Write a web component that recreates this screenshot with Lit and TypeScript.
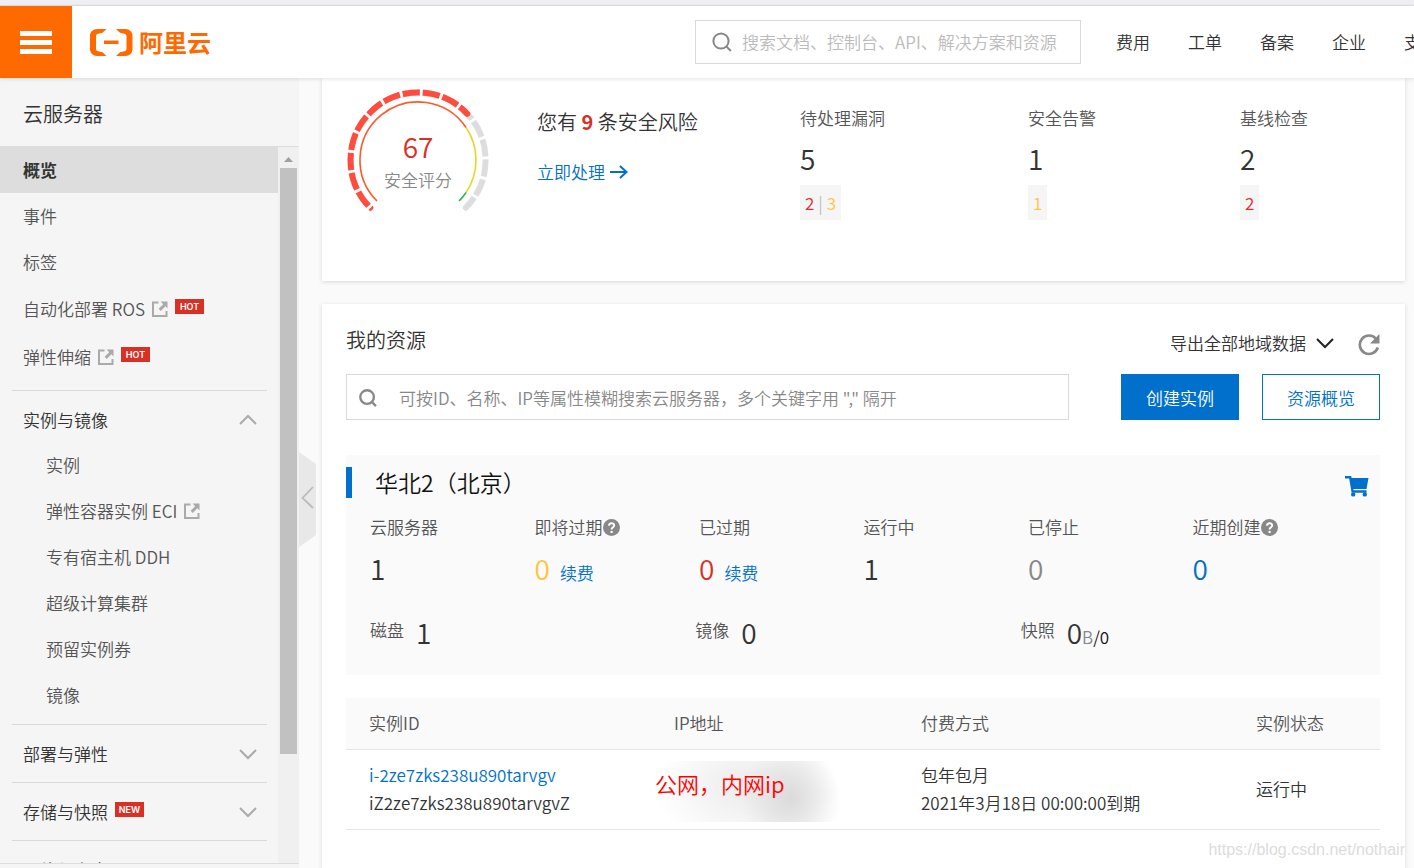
import { LitElement, html, css, svg } from "lit";
import { customElement, property } from "lit/decorators.js";
import { classMap } from "lit/directives/class-map.js";

const reset = css`
  :host,
  * {
    box-sizing: border-box;
  }
  a {
    color: inherit;
    text-decoration: none;
  }
  button {
    font: inherit;
    color: inherit;
    background: none;
    border: 0;
    padding: 0;
    cursor: pointer;
  }
  input {
    font: inherit;
    color: #333;
    border: 0;
    padding: 0;
    outline: 0;
    background: none;
    flex: 1;
    min-width: 0;
  }
  svg {
    display: block;
    flex: none;
  }
  h1,
  h2,
  h3,
  p,
  ul,
  dl,
  dd {
    margin: 0;
    padding: 0;
    font-weight: inherit;
    list-style: none;
  }
`;

const searchIcon = (size: number, width: number) => html`<svg
  width=${size}
  height=${size}
  viewBox="0 0 20 20"
  fill="none"
  stroke="#888"
  stroke-width=${width}
  aria-hidden="true"
>
  <circle cx="9" cy="9" r="7.6" />
  <path d="M14.4 14.4 18.8 19" />
</svg>`;

const chevron = (direction: "up" | "down", color: string) => html`<svg
  width="18"
  height="12"
  viewBox="0 0 18 12"
  fill="none"
  stroke=${color}
  stroke-width="2"
  aria-hidden="true"
>
  <path d=${direction === "up" ? "M1 10 9 2 17 10" : "M1 2 9 10 17 2"} />
</svg>`;

const externalIcon = html`<svg width="16" height="16" viewBox="0 0 16 16" aria-hidden="true">
  <path d="M6.500 1.500H1V15H14.500V10" fill="none" stroke="#aaa" stroke-width="2" />
  <path d="M8.600.6H15.500V7.400L13.400 5.300 8.800 10 6.600 7.800 11.200 3.200Z" fill="#aaa" />
</svg>`;

const helpIcon = html`<svg width="17" height="17" viewBox="0 0 17 17" aria-hidden="true">
  <circle cx="8.500" cy="8.500" r="8.500" fill="#888" />
  <path d="M6 6.800C6 3.400 11.200 3.500 11.200 6.600 11.200 8.400 8.600 8.300 8.600 10.400" fill="none" stroke="#fff" stroke-width="1.900" />
  <circle cx="8.600" cy="12.900" r="1.200" fill="#fff" />
</svg>`;

@customElement("top-bar")
class TopBar extends LitElement {
  static styles = [
    reset,
    css`
      :host {
        display: flex;
        align-items: center;
        flex: none;
        height: 72px;
        background: #fff;
        box-shadow: 0 1px 4px rgba(0, 0, 0, 0.12);
        position: relative;
        z-index: 2;
      }
      .menu {
        flex: none;
        width: 72px;
        height: 72px;
        background: #ff6a00;
        display: flex;
        align-items: center;
        justify-content: center;
      }
      .logo {
        display: flex;
        align-items: center;
        gap: 6px;
        margin-left: 18px;
        color: #ff6a00;
        font-size: 24px;
        font-weight: 700;
        line-height: 32px;
        white-space: nowrap;
      }
      .search {
        display: flex;
        align-items: center;
        gap: 10px;
        flex: 0 1 386px;
        height: 44px;
        margin-left: auto;
        padding: 0 16px;
        border: 1px solid #d9d9d9;
      }
      .search input::placeholder {
        color: #bbb;
      }
      .links {
        display: flex;
        gap: 38px;
        flex: 0 0 298px;
        margin-left: 35px;
        overflow: hidden;
        white-space: nowrap;
      }
      .links li {
        flex: none;
      }
    `,
  ];

  render() {
    return html`
      <button class="menu" aria-label="菜单">
        <svg width="32" height="23" viewBox="0 0 32 23" fill="#fff">
          <path d="M0 0h32v5H0zM0 9h32v5H0zM0 18h32v5H0z" />
        </svg>
      </button>
      <a class="logo" href="#">
        <svg width="43" height="27" viewBox="0 0 43 27" fill="currentColor" aria-hidden="true">
          <path d="M16.500 0H7C3 0 0 3 0 7V20C0 24 3 27 7 27H16.500L12.500 23.200 8 22.300Q6 21.800 6 20V7Q6 5.200 8 4.700L12.500 3.800Z" />
          <path d="M26 0h9.500c4 0 7 3 7 7v13c0 4-3 7-7 7H26l4-3.800 4.500-.9q2-.5 2-2.300V7q0-1.800-2-2.300L30 3.800Z" />
          <path d="M14 11.500h14.500v3.500H14z" />
        </svg>
        阿里云
      </a>
      <label class="search">
        ${searchIcon(20, 2)}
        <input type="text" aria-label="搜索" placeholder="搜索文档、控制台、API、解决方案和资源" />
      </label>
      <ul class="links">
        ${["费用", "工单", "备案", "企业", "支持"].map((t) => html`<li><a href="#">${t}</a></li>`)}
      </ul>
    `;
  }
}

interface NavItem {
  label: string;
  external?: boolean;
  badge?: string;
  active?: boolean;
}

interface NavGroup {
  label: string;
  badge?: string;
  items?: NavItem[];
}

const topItems: NavItem[] = [
  { label: "概览", active: true },
  { label: "事件" },
  { label: "标签" },
  { label: "自动化部署 ROS", external: true, badge: "HOT" },
  { label: "弹性伸缩", external: true, badge: "HOT" },
];

const groups: NavGroup[] = [
  {
    label: "实例与镜像",
    items: [
      { label: "实例" },
      { label: "弹性容器实例 ECI", external: true },
      { label: "专有宿主机 DDH" },
      { label: "超级计算集群" },
      { label: "预留实例券" },
      { label: "镜像" },
    ],
  },
  { label: "部署与弹性" },
  { label: "存储与快照", badge: "NEW" },
  { label: "网络与安全" },
];

@customElement("side-nav")
class SideNav extends LitElement {
  static styles = [
    reset,
    css`
      :host {
        display: flex;
        flex-direction: column;
        background: #f5f5f5;
        min-height: 0;
        color: #555;
      }
      .title {
        flex: none;
        height: 69px;
        padding: 20px 23px 0;
        border-bottom: 1px solid #ddd;
        font-size: 20px;
        line-height: 32px;
        color: #333;
      }
      .body {
        flex: 1;
        min-height: 0;
        display: flex;
        overflow: hidden;
        border-bottom: 1px solid #ddd;
        margin-bottom: 4px;
      }
      nav {
        flex: 1;
        min-width: 0;
      }
      .item {
        display: flex;
        align-items: center;
        height: 46px;
        padding-left: 23px;
      }
      .item.active {
        background: #ddd;
        color: #333;
        font-weight: 700;
      }
      .item.tagged {
        height: 48px;
      }
      .item svg {
        margin-left: 7px;
      }
      .badge {
        align-self: flex-start;
        width: 29px;
        margin: 14px 0 0 7px;
        background: #d93026;
        color: #fff;
        font: 600 9px/15px Inter, sans-serif;
        text-align: center;
      }
      .group {
        margin: 0 11px 0 12px;
        padding: 7px 0 6px;
        border-top: 1px solid #d9d9d9;
      }
      .group:first-of-type {
        margin-top: 9px;
      }
      .head {
        display: flex;
        align-items: center;
        width: 100%;
        height: 44px;
        padding: 0 10px 0 11px;
        color: #333;
      }
      .head svg {
        margin-left: auto;
      }
      .head .badge {
        margin: 12px 0 0 7px;
      }
      .group .item {
        padding-left: 34px;
      }
      .scroll {
        flex: none;
        width: 21px;
        padding: 10px 2px 0;
        background: #f0f0f0;
      }
      .scroll svg {
        margin: 0 auto 6px;
      }
      .thumb {
        height: 83%;
        background: #c1c1c1;
      }
    `,
  ];

  private item(i: NavItem) {
    return html`<li>
      <a class=${classMap({ item: true, active: !!i.active, tagged: !!i.badge })} href="#">
        ${i.label}${i.external ? externalIcon : ""}${i.badge ? html`<span class="badge">${i.badge}</span>` : ""}
      </a>
    </li>`;
  }

  render() {
    return html`
      <h1 class="title">云服务器</h1>
      <div class="body">
        <nav>
          <ul>
            ${topItems.map((i) => this.item(i))}
          </ul>
          ${groups.map(
            (g) => html`<section class="group">
              <button class="head">
                ${g.label}${g.badge ? html`<span class="badge">${g.badge}</span>` : ""}
                ${chevron(g.items ? "up" : "down", "#aaa")}
              </button>
              ${g.items ? html`<ul>${g.items.map((i) => this.item(i))}</ul>` : ""}
            </section>`,
          )}
        </nav>
        <div class="scroll">
          <svg width="9" height="5" viewBox="0 0 9 5" fill="#a0a0a0"><path d="M0 5 4.500 0 9 5Z" /></svg>
          <div class="thumb"></div>
        </div>
      </div>
    `;
  }
}

const arcPoint = (cx: number, cy: number, r: number, deg: number) => {
  const a = (deg * Math.PI) / 180;
  return `${(cx + r * Math.cos(a)).toFixed(2)} ${(cy + r * Math.sin(a)).toFixed(2)}`;
};

/** Arc path on a 270 degree dial; from and to are degrees along the dial. */
const arc = (r: number, from: number, to: number) =>
  `M${arcPoint(72, 72, r, 135 + from)}A${r} ${r} 0 ${to - from > 180 ? 1 : 0} 1 ${arcPoint(72, 72, r, 135 + to)}`;

@customElement("score-dial")
class ScoreDial extends LitElement {
  @property({ type: Number }) score = 0;

  static styles = css`
    :host {
      display: grid;
      width: 144px;
      height: 144px;
    }
    svg,
    .text {
      grid-area: 1 / 1;
    }
    .text {
      text-align: center;
      padding-top: 40px;
    }
    .value {
      font-size: 28px;
      line-height: 36px;
      color: #d93026;
    }
    .caption {
      line-height: 32px;
      color: #888;
    }
  `;

  render() {
    const end = (this.score / 100) * 270;
    const ticks = Array.from({ length: 16 }, (_, k) => 1 + k * 17.1);
    return html`
      <svg width="144" height="144" viewBox="0 0 144 144" fill="none" aria-hidden="true">
        <path d=${arc(67.5, 0, 270)} stroke="#ddd" stroke-width="6" stroke-linecap="round" />
        <path d=${arc(67.5, 0, end + 1)} stroke="#ff4c3f" stroke-width="6" stroke-linecap="round" />
        ${ticks.map((t) => svg`<path d=${arc(67.5, t - 1.2, t + 1.2)} stroke="#fff" stroke-width="8" />`)}
        <path d=${arc(58, 0, 191)} stroke="#fb5a2c" stroke-width="1.600" />
        <path d=${arc(58, 191, 259)} stroke="#e6d821" stroke-width="1.600" />
        <path d=${arc(58, 259, 270)} stroke="#35b558" stroke-width="1.600" />
      </svg>
      <div class="text">
        <div class="value">${this.score}</div>
        <div class="caption">安全评分</div>
      </div>
    `;
  }
}

@customElement("security-card")
class SecurityCard extends LitElement {
  static styles = [
    reset,
    css`
      :host {
        display: grid;
        grid-template-columns: 191px 263fr 228fr 212fr 141fr;
        padding: 10px 24px 49px;
        background: #fff;
        box-shadow: 0 1px 4px rgba(0, 0, 0, 0.14);
      }
      .risk {
        padding-top: 18px;
        font-size: 20px;
        line-height: 32px;
      }
      .risk strong {
        color: #d93026;
      }
      .handle {
        display: inline-flex;
        align-items: center;
        gap: 5px;
        margin-top: 18px;
        font-size: 17px;
        color: #0070cc;
      }
      .stat {
        padding-top: 18px;
        color: #555;
      }
      .num {
        margin-top: 8px;
        font-size: 28px;
        line-height: 40px;
        color: #333;
      }
      .levels {
        display: inline-flex;
        gap: 4px;
        height: 35px;
        margin-top: 7px;
        padding: 0 5px;
        background: #f5f5f5;
        line-height: 36px;
        color: #bbb;
      }
      .high {
        color: #d93026;
      }
      .mid {
        color: #ffc440;
      }
    `,
  ];

  render() {
    return html`
      <score-dial .score=${67}></score-dial>
      <div class="risk">
        <p>您有 <strong>9</strong> 条安全风险</p>
        <a class="handle" href="#"
          >立即处理
          <svg width="18" height="14" viewBox="0 0 18 14" fill="none" stroke="currentColor" stroke-width="2">
            <path d="M0 7H16M10 1 16.500 7 10 13" />
          </svg>
        </a>
      </div>
      <dl class="stat">
        <dt>待处理漏洞</dt>
        <dd class="num">5</dd>
        <dd class="levels"><span class="high">2</span><span>|</span><span class="mid">3</span></dd>
      </dl>
      <dl class="stat">
        <dt>安全告警</dt>
        <dd class="num">1</dd>
        <dd class="levels"><span class="mid">1</span></dd>
      </dl>
      <dl class="stat">
        <dt>基线检查</dt>
        <dd class="num">2</dd>
        <dd class="levels"><span class="high">2</span></dd>
      </dl>
    `;
  }
}

interface Stat {
  label: string;
  value: number;
  tone?: string;
  help?: boolean;
  renew?: boolean;
}

const stats: Stat[] = [
  { label: "云服务器", value: 1 },
  { label: "即将过期", value: 0, tone: "warn", help: true, renew: true },
  { label: "已过期", value: 0, tone: "danger", renew: true },
  { label: "运行中", value: 1 },
  { label: "已停止", value: 0, tone: "muted" },
  { label: "近期创建", value: 0, tone: "link", help: true },
];

@customElement("resource-card")
class ResourceCard extends LitElement {
  static styles = [
    reset,
    css`
      :host {
        display: block;
        flex: 1;
        padding: 20px 25px 0 24px;
        background: #fff;
        box-shadow: 0 1px 4px rgba(0, 0, 0, 0.14);
      }
      .head {
        display: flex;
        align-items: center;
        height: 38px;
      }
      .head h2 {
        font-size: 20px;
        line-height: 32px;
        margin: 0 auto 6px 0;
      }
      .export {
        display: flex;
        align-items: center;
        gap: 10px;
      }
      .refresh {
        margin: 4px 0 0 24px;
      }
      .tools {
        display: flex;
        gap: 23px;
        margin-top: 12px;
      }
      .search {
        display: flex;
        align-items: center;
        gap: 22px;
        flex: 1;
        height: 46px;
        margin-right: 29px;
        padding: 2px 12px 0;
        border: 1px solid #d9d9d9;
      }
      .search input::placeholder {
        color: #888;
      }
      .btn {
        width: 118px;
        height: 46px;
        padding-top: 2px;
        border: 1px solid #0070cc;
        color: #0070cc;
      }
      .btn.primary {
        background: #0070cc;
        color: #fff;
      }
      .region {
        margin-top: 35px;
        padding: 12px 0 20px;
        background: #fafafa;
      }
      .region-head {
        display: flex;
        align-items: flex-end;
        justify-content: space-between;
        padding-right: 11px;
        border-left: 6px solid #0070cc;
        height: 31px;
      }
      .region-head h3 {
        padding-left: 23px;
        font-size: 23px;
        line-height: 31px;
        color: #111;
      }
      .stats {
        display: grid;
        grid-template-columns: repeat(6, 1fr);
        margin: 14px 23px 0 24px;
      }
      .stats dt {
        display: flex;
        align-items: center;
        line-height: 30px;
        color: #555;
      }
      .value {
        display: flex;
        align-items: baseline;
        gap: 10px;
        margin-top: 4px;
        color: #0070cc;
      }
      .value b {
        font-weight: inherit;
        font-size: 28px;
        line-height: 44px;
        color: #333;
      }
      .value .warn {
        color: #ffc440;
      }
      .value .danger {
        color: #d93026;
      }
      .value .muted {
        color: #888;
      }
      .value .link {
        color: #0070cc;
      }
      .assets {
        display: grid;
        grid-template-columns: repeat(3, 1fr);
        margin: 20px 34px 0 24px;
      }
      .assets div {
        display: flex;
        align-items: flex-start;
        height: 45px;
        color: #111;
      }
      .assets dt {
        margin-right: 12px;
        line-height: 40px;
        color: #555;
      }
      .assets b {
        font-weight: inherit;
        font-size: 28px;
        line-height: 44px;
        color: #333;
      }
      .assets i {
        font-style: normal;
        color: #888;
      }
      table {
        width: 100%;
        margin-top: 23px;
        border-collapse: collapse;
        table-layout: fixed;
        line-height: 28px;
      }
      th,
      td {
        padding: 11px 0 12px 23px;
        border-bottom: 1px solid #e6e6e6;
        text-align: left;
        font-weight: inherit;
      }
      th {
        background: #fafafa;
        color: #555;
      }
      .id {
        width: 305px;
      }
      .ip {
        width: 247px;
      }
      .state {
        width: 147px;
      }
      td a {
        color: #0070cc;
      }
      .masked {
        padding: 4px 0 0 4px;
      }
      .mask {
        height: 61px;
        padding-top: 4px;
        font-size: 22px;
        line-height: 36px;
        color: #f00;
        background: radial-gradient(ellipse 50px 56px at 136px 38px, rgba(200, 200, 200, 0.6), rgba(210, 210, 210, 0.4) 50%, transparent),
          radial-gradient(ellipse 90px 64px at 90px 26px, rgba(215, 215, 215, 0.5), rgba(230, 230, 230, 0.4) 50%, transparent);
      }
    `,
  ];

  render() {
    return html`
      <div class="head">
        <h2>我的资源</h2>
        <button class="export">导出全部地域数据 ${chevron("down", "#222")}</button>
        <button class="refresh" aria-label="刷新">
          <svg width="22" height="22" viewBox="0 0 22 22">
            <path d="M18.200 5A9.200 9.200 0 1 0 19.800 13.500" fill="none" stroke="#888" stroke-width="2.600" />
            <path d="M21.500 0V9.500H12Z" fill="#888" />
          </svg>
        </button>
      </div>
      <div class="tools">
        <label class="search">
          ${searchIcon(18, 2.6)}
          <input type="text" aria-label="搜索云服务器" placeholder="可按ID、名称、IP等属性模糊搜索云服务器，多个关键字用 &quot;,&quot; 隔开" />
        </label>
        <button class="btn primary">创建实例</button>
        <button class="btn">资源概览</button>
      </div>
      <section class="region">
        <div class="region-head">
          <h3>华北2（北京）</h3>
          <button aria-label="购买">
            <svg width="24" height="22" viewBox="0 0 24 22" fill="#0070cc">
              <path d="M0 0H6.200L6.600 2H23.500L21.500 13H8.400L8.600 14.200H21.500V16.800H6.600L4.200 2.400H0Z" />
              <circle cx="8.200" cy="18.400" r="2.200" />
              <circle cx="19.800" cy="18.400" r="2.200" />
            </svg>
          </button>
        </div>
        <div class="stats">
          ${stats.map(
            (s) => html`<dl>
              <dt>${s.label}${s.help ? helpIcon : ""}</dt>
              <dd class="value">
                <b class=${s.tone ?? ""}>${s.value}</b>${s.renew ? html`<a href="#">续费</a>` : ""}
              </dd>
            </dl>`,
          )}
        </div>
        <dl class="assets">
          <div><dt>磁盘</dt><dd><b>1</b></dd></div>
          <div><dt>镜像</dt><dd><b>0</b></dd></div>
          <div><dt>快照</dt><dd><b>0</b><i>B</i>/0</dd></div>
        </dl>
      </section>
      <table>
        <thead>
          <tr>
            <th class="id">实例ID</th>
            <th class="ip">IP地址</th>
            <th>付费方式</th>
            <th class="state">实例状态</th>
          </tr>
        </thead>
        <tbody>
          <tr>
            <td><a href="#">i-2ze7zks238u890tarvgv</a><br />iZ2ze7zks238u890tarvgvZ</td>
            <td class="masked"><div class="mask">公网，内网ip</div></td>
            <td>包年包月<br />2021年3月18日 00:00:00到期</td>
            <td>运行中</td>
          </tr>
        </tbody>
      </table>
    `;
  }
}

@customElement("app-root")
class AppRoot extends LitElement {
  static styles = [
    reset,
    css`
      :host {
        display: flex;
        flex-direction: column;
        position: relative;
        height: 100vh;
        overflow: hidden;
        background: #fafafa;
        color: #333;
        font: 350 17px/24px "Noto Sans CJK SC", "Noto Sans", sans-serif;
      }
      .strip {
        flex: none;
        height: 6px;
        background: #eeeef3;
        border-bottom: 1px solid #e0e0e4;
      }
      .layout {
        flex: 1;
        min-height: 0;
        display: grid;
        grid-template-columns: 299px 23px minmax(0, 1fr);
        grid-template-rows: minmax(0, 1fr);
      }
      .gutter {
        padding-top: 374px;
      }
      main {
        display: flex;
        flex-direction: column;
        gap: 23px;
        min-height: 0;
        padding-right: 9px;
      }
      .watermark {
        position: absolute;
        right: 9px;
        bottom: 6px;
        font: 400 16px/24px "Liberation Sans", sans-serif;
        color: #dcdcdc;
      }
    `,
  ];

  render() {
    return html`
      <div class="strip"></div>
      <top-bar></top-bar>
      <div class="layout">
        <side-nav></side-nav>
        <div class="gutter">
          <button aria-label="收起">
            <svg width="17" height="95" viewBox="0 0 17 95">
              <path d="M0 0 17 12V83L0 95Z" fill="#e8e8e8" />
              <path d="M14 35 3.500 46 14 56" fill="none" stroke="#bbb" stroke-width="1.800" />
            </svg>
          </button>
        </div>
        <main>
          <security-card></security-card>
          <resource-card></resource-card>
        </main>
      </div>
      <span class="watermark">https://blog.csdn.net/nothair</span>
    `;
  }
}
